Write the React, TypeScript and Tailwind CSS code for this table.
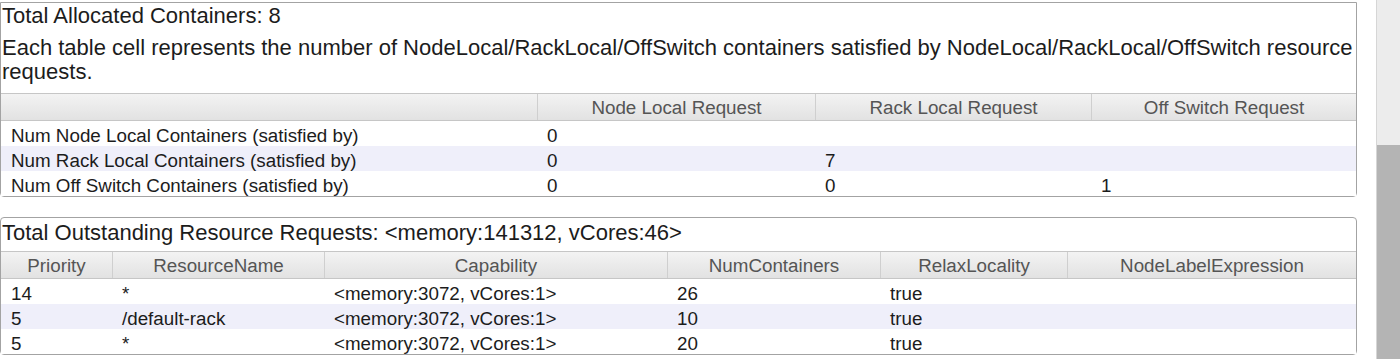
const font = { fontFamily: '"Liberation Sans", Arial, Helvetica, sans-serif' };

type Row = string[];

const allocHead = ["", "Node Local Request", "Rack Local Request", "Off Switch Request"];
const allocRows: Row[] = [
  ["Num Node Local Containers (satisfied by)", "0", "", ""],
  ["Num Rack Local Containers (satisfied by)", "0", "7", ""],
  ["Num Off Switch Containers (satisfied by)", "0", "0", "1"],
];

const reqHead = ["Priority", "ResourceName", "Capability", "NumContainers", "RelaxLocality", "NodeLabelExpression"];
const reqRows: Row[] = [
  ["14", "*", "<memory:3072, vCores:1>", "26", "true", ""],
  ["5", "/default-rack", "<memory:3072, vCores:1>", "10", "true", ""],
  ["5", "*", "<memory:3072, vCores:1>", "20", "true", ""],
];

function Table({ cols, head, rows }: { cols: string; head: string[]; rows: Row[] }) {
  return (
    <div>
      <div className={`grid ${cols} border-y border-[#c6c6c6] bg-gradient-to-b from-[#f3f3f3] to-[#e2e2e2]`}>
        {head.map((h, i) => (
          <div
            key={i}
            className={`h-[26px] pt-[3px] text-center text-[18.8px] leading-[22px] text-[#555] ${i > 0 ? "border-l border-[#cfcfcf]" : ""}`}
          >
            {h}
          </div>
        ))}
      </div>
      {rows.map((r, ri) => (
        <div key={ri} className={`grid ${cols} ${ri % 2 === 1 ? "bg-[#efeffa]" : "bg-white"}`}>
          {r.map((c, ci) => (
            <div key={ci} className="h-[25px] whitespace-nowrap pl-[10px] pt-[4px] text-[18.8px] leading-[21px] text-[#1c1c1c]">
              {c}
            </div>
          ))}
        </div>
      ))}
    </div>
  );
}

export default function App() {
  return (
    <div className="flex h-[359px] w-[1400px] overflow-hidden bg-white" style={font}>
      <div className="flex-1 pt-[2px]">
        <div className="w-[1357px] rounded-b-[4px] border border-[#a3a3a3]">
          <div className="whitespace-nowrap pl-[1px] text-[22px] leading-[26px] text-[#1c1c1c]">
            Total Allocated Containers: 8
          </div>
          <p className="mt-[7px] pl-[1px] text-[22px] leading-[24px] text-[#1c1c1c]">
            Each table cell represents the number of NodeLocal/RackLocal/OffSwitch containers satisfied by
            NodeLocal/RackLocal/OffSwitch resource requests.
          </p>
          <div className="mt-[9px]">
            <Table cols="grid-cols-[536px_278px_276px_265px]" head={allocHead} rows={allocRows} />
          </div>
        </div>

        <div className="mt-[20px] w-[1357px] rounded-[4px] border border-[#a3a3a3]">
          <div className="h-[33px] whitespace-nowrap pl-[1px] pt-[2px] text-[22px] leading-[26px] text-[#1c1c1c]">
            Total Outstanding Resource Requests: &lt;memory:141312, vCores:46&gt;
          </div>
          <Table
            cols="grid-cols-[111px_212px_343px_213px_187px_289px]"
            head={reqHead}
            rows={reqRows}
          />
        </div>
      </div>

      <div className="flex w-[24px] flex-col border-l border-[#d6d6d6]">
        <div className="h-[145px] bg-[#ececec]" />
        <div className="flex-1 bg-[#b4b4b4]" />
      </div>
    </div>
  );
}
